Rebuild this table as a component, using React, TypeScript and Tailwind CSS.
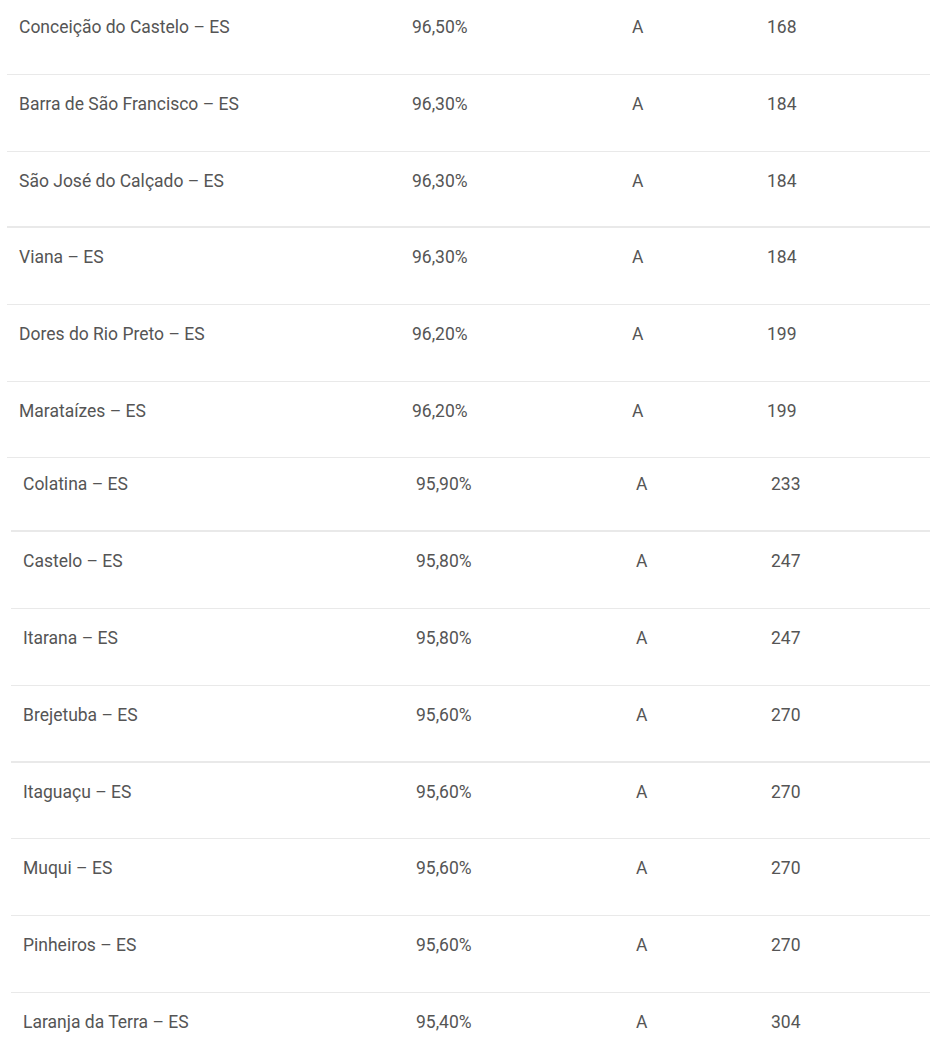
import * as React from "react";

type Row = { city: string; pct: string; grade: string; rank: string; thick?: boolean };

const first: Row[] = [
  { city: "Conceição do Castelo – ES", pct: "96,50%", grade: "A", rank: "168" },
  { city: "Barra de São Francisco – ES", pct: "96,30%", grade: "A", rank: "184" },
  { city: "São José do Calçado – ES", pct: "96,30%", grade: "A", rank: "184", thick: true },
  { city: "Viana – ES", pct: "96,30%", grade: "A", rank: "184" },
  { city: "Dores do Rio Preto – ES", pct: "96,20%", grade: "A", rank: "199" },
  { city: "Marataízes – ES", pct: "96,20%", grade: "A", rank: "199" },
];

const second: Row[] = [
  { city: "Colatina – ES", pct: "95,90%", grade: "A", rank: "233", thick: true },
  { city: "Castelo – ES", pct: "95,80%", grade: "A", rank: "247" },
  { city: "Itarana – ES", pct: "95,80%", grade: "A", rank: "247" },
  { city: "Brejetuba – ES", pct: "95,60%", grade: "A", rank: "270", thick: true },
  { city: "Itaguaçu – ES", pct: "95,60%", grade: "A", rank: "270" },
  { city: "Muqui – ES", pct: "95,60%", grade: "A", rank: "270" },
  { city: "Pinheiros – ES", pct: "95,60%", grade: "A", rank: "270" },
  { city: "Laranja da Terra – ES", pct: "95,40%", grade: "A", rank: "304" },
];

const TableRow = ({ row, size }: { row: Row; size: string }) => (
  <div
    className={
      "flex items-start border-[#e9e9e9] " +
      (row.thick ? "border-b-2 " : "border-b ") +
      size
    }
  >
    <div className="w-[405px] pl-3 leading-6">{row.city}</div>
    <div className="w-[220px] leading-6">{row.pct}</div>
    <div className="w-[135px] leading-6">{row.grade}</div>
    <div className="flex-1 leading-6">{row.rank}</div>
  </div>
);

export default function App() {
  return (
    <div
      className="w-[930px] h-[1059px] overflow-hidden bg-white text-[17.5px] text-[#555555]"
      style={{ fontFamily: "Roboto, 'Liberation Sans', sans-serif" }}
    >
      <div className="ml-[7px]">
        {first.map((r, i) => (
          <TableRow
            key={r.city}
            row={r}
            size={i === 0 ? "h-[75px] pt-[15px]" : "h-[76.7px] pt-[17px]"}
          />
        ))}
      </div>
      <div className="ml-[11px]">
        {second.map((r, i) => (
          <TableRow
            key={r.city}
            row={r}
            size={i === 0 ? "h-[74px] pt-[14px]" : "h-[76.7px] pt-[17px]"}
          />
        ))}
      </div>
    </div>
  );
}
